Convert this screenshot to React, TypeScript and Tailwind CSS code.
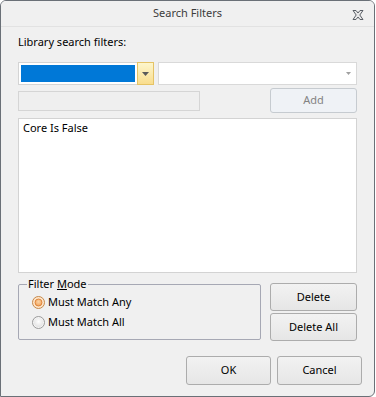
import React from 'react';

const font = { fontFamily: '"Noto Sans", "Open Sans", sans-serif' };

const Radio: React.FC<{ checked?: boolean; label: string }> = ({ checked, label }) => (
  <label className="flex items-center gap-[3px] h-[20px] text-[11px] text-black">
    <svg width="13" height="13" viewBox="0 0 13 13">
      <defs>
        <radialGradient id={checked ? 'rOn' : 'rOff'} cx="50%" cy="40%" r="60%">
          <stop offset="0%" stopColor={checked ? '#fbd3a6' : '#ffffff'} />
          <stop offset="100%" stopColor={checked ? '#f0a35a' : '#e2e2e2'} />
        </radialGradient>
      </defs>
      <circle cx="6.5" cy="6.5" r="6" fill={checked ? '#fde6cb' : '#f4f4f4'} stroke={checked ? '#c4874a' : '#9a9a9a'} />
      {checked ? (
        <circle cx="6.5" cy="6.5" r="3.5" fill="url(#rOn)" stroke="#d9782c" strokeWidth="0.8" />
      ) : (
        <circle cx="6.5" cy="6.5" r="4.5" fill="url(#rOff)" />
      )}
    </svg>
    <span>{label}</span>
  </label>
);

const Button: React.FC<{ label: React.ReactNode; disabled?: boolean; className?: string }> = ({ label, disabled, className }) => (
  <button
    className={
      'flex items-center justify-center rounded-[3px] border text-[11px] ' +
      (disabled
        ? 'border-[#c6cbd0] bg-[#eff2f6] text-[#838383] '
        : 'border-[#acacac] bg-gradient-to-b from-[#f2f2f2] to-[#e6e6e6] text-black ') +
      (className ?? '')
    }
  >
    {label}
  </button>
);

export default function App() {
  return (
    <div style={font} className="w-[376px] h-[397px] bg-white">
      <div className="w-[375px] h-[397px] flex flex-col border border-[#6a7077] rounded-t-[6px] rounded-br-[6px] bg-[#f0f0f0] overflow-hidden">
        {/* title bar */}
        <div className="relative h-[26px] flex items-center justify-center border-b border-[#e2e2e2] bg-[#f0f0f0]">
          <span className="text-[11px] text-[#3c3c3c]">Search Filters</span>
          <svg className="absolute right-[10px] top-[9px]" width="12" height="10" viewBox="0 0 12 10">
            <path d="M1 0.5h3l2 2.5 2-2.5h3l-3.2 4.5 3.2 4.5h-3l-2-2.5-2 2.5h-3l3.2-4.5z" fill="#e8e8e8" stroke="#5a5f66" strokeWidth="1" strokeLinejoin="round" />
          </svg>
        </div>

        <div className="flex flex-col pl-[17px] pr-[17px]">
          <div className="mt-[7px] h-[16px] text-[11px] text-black leading-[16px]">Library search filters:</div>

          {/* combo row */}
          <div className="mt-[12px] flex h-[23px]">
            <div className="flex w-[136px] border border-[#d4d4d4] bg-white">
              <div className="m-[2px] flex-1 bg-[#0078d7]" />
              <div className="w-[17px] -my-[1px] -mr-[1px] border border-[#e5c365] bg-gradient-to-b from-[#fdf6cc] to-[#f9dd8d] flex items-center justify-center">
                <svg width="7" height="4" viewBox="0 0 7 4"><path d="M0 0h7L3.5 4z" fill="#5a5a5a" /></svg>
              </div>
            </div>
            <div className="ml-[4px] flex-1 border border-[#d9d9d9] bg-white flex items-center justify-end pr-[5px]">
              <svg width="5" height="3" viewBox="0 0 5 3"><path d="M0 0h5L2.5 3z" fill="#a0a0a0" /></svg>
            </div>
          </div>

          {/* text + add row */}
          <div className="mt-[3px] flex h-[25px] items-center">
            <div className="h-[20px] w-[182px] border border-[#d5d5d5] bg-[#efefef]" />
            <div className="flex-1" />
            <Button label="Add" disabled className="w-[87px] h-[25px]" />
          </div>

          {/* list */}
          <div className="mt-[5px] h-[155px] border border-[#d3d3d3] bg-white px-[4px] pt-[1px]">
            <div className="text-[11px] leading-[16px] text-black">Core Is False</div>
          </div>

          {/* bottom section */}
          <div className="mt-[11px] flex">
            <fieldset className="-mt-[6px] w-[243px] h-[62px] border border-[#a6a8b4] rounded-[2px] pl-[13px]">
              <legend className="-ml-[5px] px-[1px] text-[11px] leading-[12px] text-black">
                Filter <span className="underline">M</span>ode
              </legend>
              <div className="mt-[2px] flex flex-col">
                <Radio checked label="Must Match Any" />
                <Radio label="Must Match All" />
              </div>
            </fieldset>
            <div className="flex-1" />
            <div className="flex flex-col gap-[2px] -mt-[1px]">
              <Button label="Delete" className="w-[87px] h-[28px]" />
              <Button label="Delete All" className="w-[87px] h-[28px]" />
            </div>
          </div>
        </div>

        {/* ok/cancel */}
        <div className="mt-[15px] flex justify-end gap-[6px] pr-[12px]">
          <Button label="OK" className="w-[85px] h-[29px]" />
          <Button label="Cancel" className="w-[85px] h-[29px]" />
        </div>
      </div>
    </div>
  );
}
